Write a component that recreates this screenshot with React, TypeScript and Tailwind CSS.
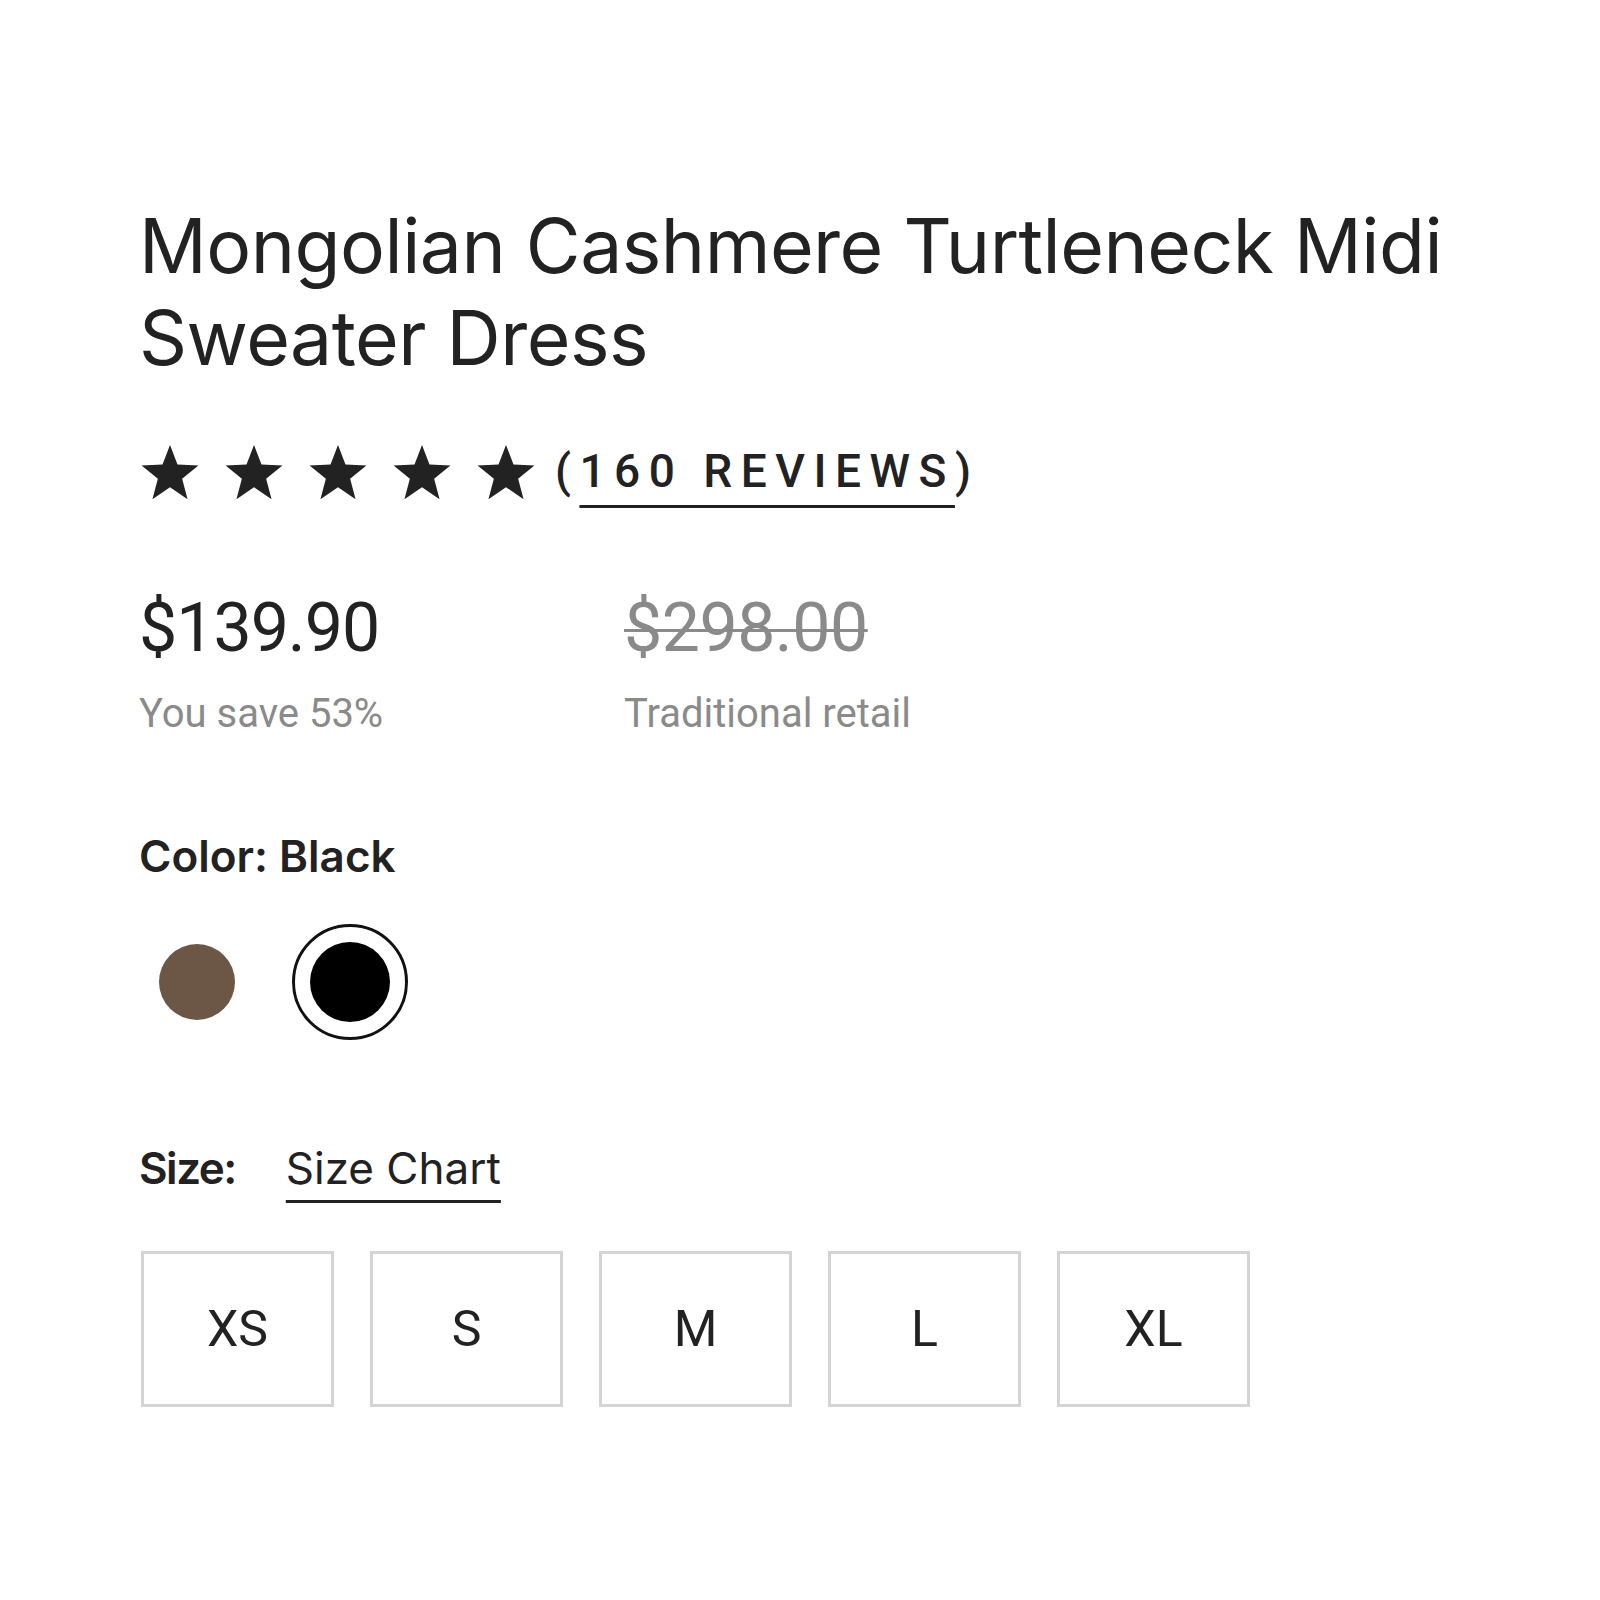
const sizes = ["XS", "S", "M", "L", "XL"];

const Star = () => (
  <svg viewBox="0 0 24 24" className="h-[62px] w-[62px]" fill="#222222">
    <path d="M12 1.5l2.9 7.6 8.1.4-6.3 5.1 2.1 7.9L12 17.9l-6.8 4.6 2.1-7.9L1 9.5l8.1-.4z" />
  </svg>
);

export default function App() {
  return (
    <div className="min-h-[1600px] w-[1600px] bg-white pl-[139px] pt-[200px] text-[#222222]">
      {/* Title */}
      <h1 className="font-['Inter',sans-serif] text-[75px] font-normal leading-[92px] tracking-[-0.5px]">
        Mongolian Cashmere Turtleneck Midi
        <br />
        Sweater Dress
      </h1>

      {/* Rating */}
      <div className="mt-[53px] flex items-center">
        <div className="flex gap-[22px]">
          <Star />
          <Star />
          <Star />
          <Star />
          <Star />
        </div>
        <span className="ml-[18px] font-['Roboto',sans-serif] text-[46px] font-medium tracking-[0.185em]">
          (
          <span className="underline decoration-[3px] underline-offset-[18px]">160 REVIEWS</span>)
        </span>
      </div>

      {/* Prices */}
      <div className="mt-[87px] flex font-['Roboto',sans-serif]">
        <div className="w-[485px]">
          <div className="text-[68px] leading-[70px] tracking-[-1px]">$139.90</div>
          <div className="mt-[27px] text-[40px] leading-[48px] text-[#8a8a8a]">You save 53%</div>
        </div>
        <div>
          <div className="text-[68px] leading-[70px] tracking-[-0.5px] text-[#8a8a8a] line-through decoration-[3px]">
            $298.00
          </div>
          <div className="mt-[27px] text-[40px] leading-[48px] text-[#8a8a8a]">Traditional retail</div>
        </div>
      </div>

      {/* Color */}
      <div className="mt-[90px] font-['Inter',sans-serif] text-[44px] font-semibold leading-[56px]">
        Color: Black
      </div>
      <div className="mt-[40px] flex gap-[37px]">
        <button className="flex h-[116px] w-[116px] items-center justify-center rounded-full">
          <span className="h-[76px] w-[76px] rounded-full bg-[#6c5646]" />
        </button>
        <button className="flex h-[116px] w-[116px] items-center justify-center rounded-full border-[3px] border-[#111111]">
          <span className="h-[80px] w-[80px] rounded-full bg-black" />
        </button>
      </div>

      {/* Size */}
      <div className="mt-[100px] flex items-baseline font-['Inter',sans-serif] text-[44px] leading-[56px]">
        <span className="font-semibold tracking-[-1.5px]">Size:</span>
        <span className="ml-[50px] underline decoration-[3px] underline-offset-[16px]">Size Chart</span>
      </div>
      <div className="ml-[2px] mt-[55px] flex gap-[36px]">
        {sizes.map((s) => (
          <button
            key={s}
            className="flex h-[156px] w-[193px] items-center justify-center border-[3px] border-[#d4d4d4] font-['Roboto',sans-serif] text-[50px]"
          >
            {s}
          </button>
        ))}
      </div>
    </div>
  );
}
